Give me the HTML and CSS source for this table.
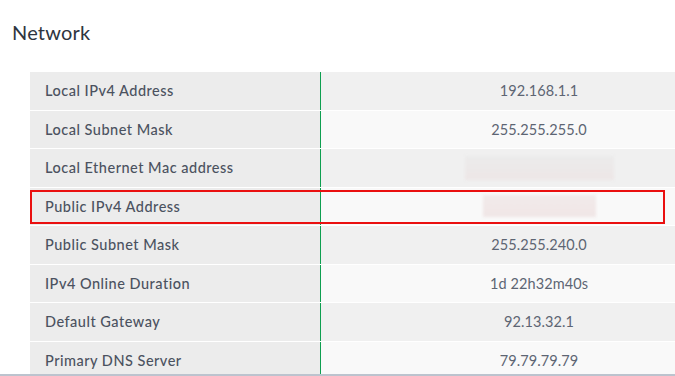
FILE: index.html
```html
<!DOCTYPE html>
<html>
<head>
<meta charset="utf-8">
<link rel="stylesheet" href="styles.css">
</head>
<body>
<div class="page">
  <h1 class="title">Network</h1>
  <div class="table-clip">
    <div class="table">
      <div class="row odd"><div class="label">Local IPv4 Address</div><div class="value">192.168.1.1</div></div>
      <div class="row even"><div class="label">Local Subnet Mask</div><div class="value">255.255.255.0</div></div>
      <div class="row odd"><div class="label">Local Ethernet Mac address</div><div class="value"><span class="blur blur-a"></span></div></div>
      <div class="row even highlight"><div class="label">Public IPv4 Address</div><div class="value"><span class="blur blur-b"></span></div></div>
      <div class="row odd"><div class="label">Public Subnet Mask</div><div class="value">255.255.240.0</div></div>
      <div class="row even"><div class="label">IPv4 Online Duration</div><div class="value">1d 22h32m40s</div></div>
      <div class="row odd"><div class="label">Default Gateway</div><div class="value">92.13.32.1</div></div>
      <div class="row even"><div class="label">Primary DNS Server</div><div class="value">79.79.79.79</div></div>
    </div>
  </div>
</div>
<div class="bottom-line"></div>
</body>
</html>
```
FILE: styles.css
```css
html, body {
  margin: 0;
  padding: 0;
  background: #ffffff;
  overflow: hidden;
  width: 675px;
  height: 376px;
}
.page {
  font-family: Lato, "Open Sans", sans-serif;
  padding-top: 19px;
}
.title {
  margin: 0 0 0 12px;
  font-size: 20px;
  font-weight: 400;
  color: #2e3540;
  line-height: 26px;
  letter-spacing: 0.2px;
}
.table-clip {
  margin: 27px 0 0 30px;
  width: 645px;
  overflow: hidden;
}
.table {
  width: 727px;
}
.row {
  display: flex;
  height: 37.5px;
  border-bottom: 1px solid #ffffff;
  position: relative;
}
.label {
  width: 275px;
  flex: none;
  padding-left: 15px;
  background: #ececec;
  border-right: 1px solid #0e9f50;
  display: flex;
  align-items: center;
  font-size: 14.5px;
  font-weight: 500;
  color: #4b5260;
  letter-spacing: 0.5px;
}
.value {
  flex: 1;
  display: flex;
  align-items: center;
  justify-content: center;
  font-size: 14.5px;
  color: #5d6573;
  letter-spacing: 0.1px;
}
.odd .value { background: #f0f0f0; }
.even .value { background: #f9f9f9; }
.highlight::after {
  content: "";
  position: absolute;
  left: 0;
  top: 2px;
  width: 635px;
  height: 34px;
  border: 2px solid #ea1010;
  box-sizing: border-box;
}
.blur {
  display: block;
  background: linear-gradient(180deg, #ebebeb, #ede6e6);
  filter: blur(1.5px);
}
.blur-a { width: 149px; height: 24px; }
.blur-b { width: 113px; height: 22px; background: linear-gradient(180deg, #f1eaea, #f0e6e6); }
.bottom-line {
  position: fixed;
  left: 0;
  right: 0;
  bottom: 0;
  height: 2px;
  background: #bcc3ce;
}
```
